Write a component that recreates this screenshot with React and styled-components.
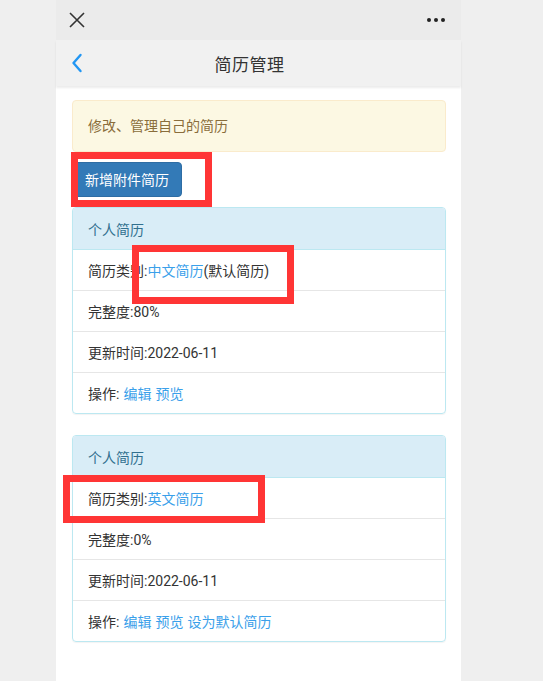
import React from "react";
import styled, { createGlobalStyle } from "styled-components";

const Global = createGlobalStyle`
  html, body { margin: 0; padding: 0; background: #efefef; }
  body { font-family: Roboto, "Noto Sans CJK SC", sans-serif; }
  * { box-sizing: border-box; }
`;

const Stage = styled.div`
  position: relative;
  min-height: 681px;
  padding-left: 56px;
  display: flex;
`;

const Phone = styled.div`
  width: 405px;
  min-height: 681px;
  background: #fff;
  display: flex;
  flex-direction: column;
`;

const TopBar = styled.div`
  height: 40px;
  background: #ebebeb;
  display: flex;
  align-items: center;
  justify-content: space-between;
  padding: 0 16px 0 12px;
`;

const Dots = styled.div`
  display: flex;
  gap: 3px;
  span {
    width: 4px;
    height: 4px;
    border-radius: 50%;
    background: #222;
  }
`;

const NavBar = styled.div`
  height: 46px;
  background: #f1f1f1;
  display: grid;
  grid-template-columns: 40px 1fr 58px;
  align-items: center;
  box-shadow: 0 2px 2px rgba(0, 0, 0, 0.08);
  position: relative;
  z-index: 1;
`;

const Back = styled.div`
  display: flex;
  justify-content: center;
  padding-left: 2px;
`;

const Title = styled.div`
  text-align: center;
  font-size: 17px;
  color: #333;
  letter-spacing: 0.5px;
`;

const Content = styled.div`
  padding: 14px 15px 0 16px;
  display: flex;
  flex-direction: column;
`;

const Alert = styled.div`
  background: #fcf8e3;
  border: 1px solid #faebcc;
  border-radius: 4px;
  color: #8a6d3b;
  font-size: 14px;
  line-height: 20px;
  padding: 15px 15px;
`;

const Button = styled.div`
  align-self: flex-start;
  margin-top: 10px;
  background: #337ab7;
  border: 1px solid #2e6da4;
  border-radius: 4px;
  color: #fff;
  font-size: 14px;
  line-height: 20px;
  padding: 7px 12px 6px;
`;

const Panel = styled.div`
  margin-top: ${(p) => p.$gap}px;
  border: 1px solid #bce8f1;
  border-radius: 4px;
  overflow: hidden;
  box-shadow: 0 1px 1px rgba(0, 0, 0, 0.05);
`;

const PanelHead = styled.div`
  height: 42px;
  background: #d9edf7;
  color: #31708f;
  font-size: 14px;
  display: flex;
  align-items: center;
  padding: 0 15px;
  border-bottom: 1px solid #bce8f1;
`;

const Row = styled.div`
  height: ${(p) => (p.$first ? 40 : 41)}px;
  display: flex;
  align-items: center;
  padding: 0 15px;
  font-size: 14px;
  color: #333;
  border-top: ${(p) => (p.$first ? "none" : "1px solid #e6e6e6")};
`;

const Link = styled.span`
  color: #3aa0ea;
  margin-left: ${(p) => p.$ml || 0}px;
`;

const Mark = styled.div`
  position: absolute;
  border: 7px solid #ff3535;
  pointer-events: none;
`;

function CardPanel({ gap, type, isDefault, percent, actions }) {
  return (
    <Panel $gap={gap}>
      <PanelHead>个人简历</PanelHead>
      <Row $first>
        简历类别:<Link>{type}</Link>
        {isDefault ? "(默认简历)" : ""}
      </Row>
      <Row>完整度:{percent}</Row>
      <Row>更新时间:2022-06-11</Row>
      <Row>
        操作:
        {actions.map((a) => (
          <Link key={a} $ml={4}>
            {a}
          </Link>
        ))}
      </Row>
    </Panel>
  );
}

export default function App() {
  return (
    <>
      <Global />
      <Stage>
        <Phone>
          <TopBar>
            <svg width="18" height="18" viewBox="0 0 18 18">
              <path d="M2 2 L16 16 M16 2 L2 16" stroke="#333" strokeWidth="1.6" fill="none" />
            </svg>
            <Dots>
              <span />
              <span />
              <span />
            </Dots>
          </TopBar>
          <NavBar>
            <Back>
              <svg width="12" height="20" viewBox="0 0 12 20">
                <path d="M9.5 2 L2.5 10 L9.5 18" stroke="#2196f3" strokeWidth="2.4" fill="none" strokeLinecap="round" strokeLinejoin="round" />
              </svg>
            </Back>
            <Title>简历管理</Title>
            <div />
          </NavBar>
          <Content>
            <Alert>修改、管理自己的简历</Alert>
            <Button>新增附件简历</Button>
            <CardPanel gap={10} type="中文简历" isDefault percent="80%" actions={["编辑", "预览"]} />
            <CardPanel gap={21} type="英文简历" percent="0%" actions={["编辑", "预览", "设为默认简历"]} />
          </Content>
        </Phone>
        <Mark style={{ left: 71, top: 152, width: 141, height: 55 }} />
        <Mark style={{ left: 132, top: 245, width: 162, height: 59 }} />
        <Mark style={{ left: 63, top: 475, width: 202, height: 48 }} />
      </Stage>
    </>
  );
}
